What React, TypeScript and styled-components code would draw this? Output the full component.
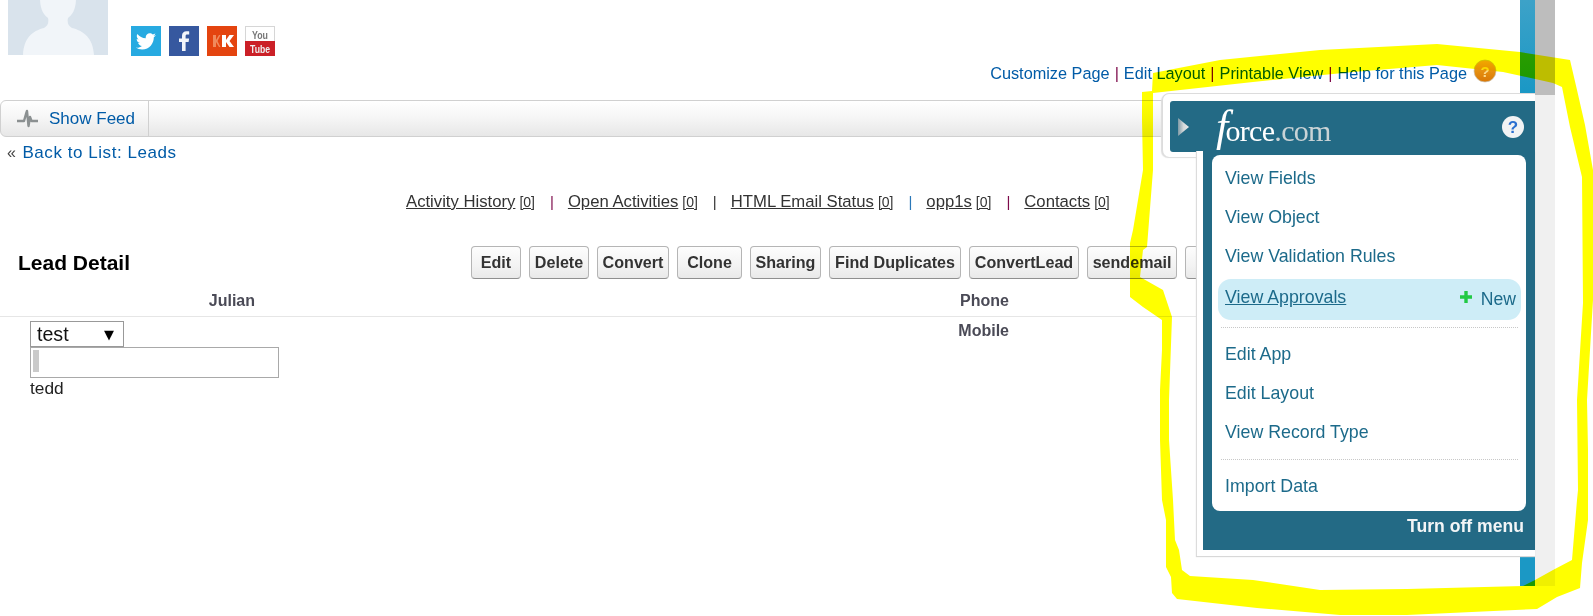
import React from "react";
import styled, { createGlobalStyle } from "styled-components";

const Global = createGlobalStyle`
  html, body { margin: 0; padding: 0; background: #fff; overflow: hidden; }
  body { font-family: "Liberation Sans", Arial, sans-serif; color: #222; }
`;

const Page = styled.div`
  position: relative; width: 1593px; height: 616px; overflow: hidden; background: #fff;
`;
const Desk = styled.div`
  display: flex; height: 586px; width: 1555px;
`;
const Main = styled.main`
  width: 1520px; flex: none; overflow: hidden;
`;
const Strip = styled.div`
  width: 15px; flex: none;
  background: linear-gradient(180deg, #3da2c8 0, #1b98c5 90px, #1b98c5 100%);
`;
const Track = styled.div`
  width: 20px; flex: none;
  background: linear-gradient(180deg, #bdbdbd 0, #bdbdbd 95px, #f0f0f0 95px, #f0f0f0 100%);
`;

const Head = styled.div`
  display: flex; align-items: flex-end; height: 56px; padding-left: 8px;
`;
const Avatar = styled.svg`
  display: block; width: 100px; height: 55px; margin-bottom: 1px; margin-right: 23px;
`;
const Socials = styled.div`
  display: flex; gap: 8px;
`;
const SocialIcon = styled.svg`
  display: block; width: 30px; height: 30px;
`;
const TopLinks = styled.nav`
  display: flex; justify-content: flex-end; align-items: center; height: 24px;
  margin-top: 5px; padding-right: 23px; font-size: 16.3px; color: #015ba7;
`;
const Bar = styled.span<{ $c?: string }>`
  color: ${p => p.$c || "#7d0a4a"}; margin: 0 5px;
`;
const HelpDot = styled.svg`
  display: block; width: 24px; height: 24px; margin-left: 6px; margin-top: -4px;
`;
const Feed = styled.div`
  display: flex; width: 1210px; height: 37px; box-sizing: border-box; margin-top: 15px;
  border: 1px solid #d0d0d0; border-width: 1px 1px 1px 1px; border-radius: 6px 0 0 6px;
  background: linear-gradient(180deg, #ffffff 0%, #f5f5f5 50%, #e7e7e7 100%);
`;
const FeedButton = styled.div`
  display: flex; align-items: center; width: 148px; box-sizing: border-box;
  border-right: 1px solid #d0d0d0; padding-left: 15px; gap: 10px;
  font-size: 17px; color: #015ba7;
`;
const Pulse = styled.svg`
  display: block; width: 23px; height: 20px; flex: none;
`;
const Back = styled.div`
  height: 22px; line-height: 22px; margin-top: 5px; padding-left: 7px;
  font-size: 17px; letter-spacing: 0.55px; color: #015ba7;
`;
const Quote = styled.span`
  color: #444; font-size: 16px; margin-right: 6px;
`;
const Related = styled.div`
  display: flex; align-items: baseline; height: 22px; line-height: 22px;
  margin-top: 27px; padding-left: 406px; font-size: 16.7px; color: #333;
`;
const RelLink = styled.span`
  text-decoration: underline;
`;
const Count = styled.span`
  font-size: 14px; text-decoration: underline; margin-left: 4px;
`;
const RelBar = styled.span<{ $c: string }>`
  color: ${p => p.$c}; font-size: 15px; margin: 0 14px 0 15px;
`;
const DetailHead = styled.div`
  display: flex; align-items: center; height: 33px; margin-top: 33px;
`;
const Title = styled.h2`
  width: 453px; margin: 0; padding-left: 18px; box-sizing: content-box; flex: none;
  font-size: 21px; font-weight: 700; color: #000;
`;
const Buttons = styled.div`
  display: flex; gap: 8px; flex: none;
`;
const Btn = styled.button<{ $w: number }>`
  width: ${p => p.$w}px; height: 33px; padding: 0; box-sizing: border-box;
  border: 1px solid #b5b5b5; border-bottom-color: #8f8f8f; border-radius: 4px;
  background: linear-gradient(180deg, #fdfdfd 0%, #f3f3f3 60%, #e9e9e9 100%);
  font-family: "Liberation Sans", Arial, sans-serif; font-size: 16.1px; font-weight: 700; color: #333;
`;
const FieldHead = styled.div`
  display: grid; grid-template-columns: 255px 754px; height: 38px; width: 1196px;
  box-sizing: border-box; border-bottom: 1px solid #e6e6e6;
`;
const FieldLabel = styled.div`
  text-align: right; font-size: 16px; font-weight: 700; color: #4a4a56; line-height: 44px;
`;
const FieldRow = styled.div`
  display: grid; grid-template-columns: 279px 730px; padding-top: 4px;
`;
const FieldValue = styled.div`
  padding-left: 30px; display: flex; flex-direction: column; align-items: flex-start;
`;
const MobileLabel = styled.div`
  text-align: right; font-size: 16px; font-weight: 700; color: #4a4a56; line-height: 19px;
`;
const SelectBox = styled.div`
  display: flex; align-items: center; justify-content: space-between; box-sizing: border-box;
  width: 94px; height: 26px; border: 1px solid #999; padding: 0 9px 0 6px;
  font-size: 19.6px; color: #111;
`;
const Arrow = styled.span`
  font-size: 13px; color: #000; font-family: "DejaVu Sans", sans-serif;
`;
const TextBox = styled.div`
  box-sizing: border-box; width: 249px; height: 31px; border: 1px solid #a9a9a9; padding: 2px;
`;
const Caret = styled.div`
  width: 6px; height: 22px; background: #cacaca;
`;
const Tedd = styled.div`
  font-size: 17.3px; line-height: 20px; color: #222;
`;

const Panel = styled.aside`
  position: absolute; left: 1162px; top: 93px; width: 373px;
`;
const Tab = styled.div`
  height: 64px; box-sizing: border-box; padding: 7px 0 6px 7px; background: #fff;
  border-top: 1px solid #dcdcdc; border-left: 1px solid #dcdcdc; border-radius: 7px 0 0 7px;
  box-shadow: -1px 1px 1px #ddd;
`;
const TabHead = styled.div`
  display: flex; align-items: center; height: 51px; background: #236a85; border-radius: 3px 0 0 3px;
  padding-left: 8px; padding-right: 11px;
`;
const Toggle = styled.svg`
  display: block; width: 11px; height: 18px; flex: none; margin-right: 27px;
`;
const Logo = styled.div`
  flex: 1; display: flex; align-items: baseline; font-family: "Liberation Serif", serif;
  font-size: 30px; letter-spacing: -0.7px; color: #fff; height: 40px; line-height: 40px;
`;
const LogoF = styled.span`
  font-style: italic; font-size: 44px; margin-right: -2px;
`;
const LogoCom = styled.span`
  color: #c9d3d6;
`;
const Body = styled.div`
  margin-left: 34px; padding: 0 0 6px 6px; background: #fff;
  border-left: 1px solid #dcdcdc; box-shadow: 0 1px 1px #d8d8d8; margin-top: -6px; position: relative;
  box-sizing: border-box;
`;
const Column = styled.div`
  background: #236a85; padding: 4px 9px 0 9px;
`;
const Menu = styled.ul`
  list-style: none; margin: 0; padding: 4px 0 5px; background: #fff; border-radius: 8px;
  font-size: 17.8px; color: #1c6a8a;
`;
const Item = styled.li`
  height: 39px; line-height: 39px; padding-left: 13px;
`;
const ActiveItem = styled.li`
  display: flex; align-items: center; justify-content: space-between; height: 41px;
  margin: 3px 5px 0 6px; padding: 0 5px 0 7px; background: #ceedf7; border-radius: 13px;
`;
const ActiveLink = styled.span`
  text-decoration: underline; margin-top: -4px;
`;
const NewLink = styled.span`
  display: flex; align-items: center; gap: 9px; font-size: 17.6px;
`;
const Plus = styled.svg`
  display: block; width: 12px; height: 12px; margin-top: -6px;
`;
const Divider = styled.li<{ $gap: number }>`
  height: 0; border-top: 1px dotted #c8c8c8; margin: ${p => p.$gap}px 8px 7px 9px;
`;
const TurnOff = styled.div`
  height: 39px; line-height: 31px; text-align: right; padding-right: 2px;
  font-size: 17.6px; font-weight: 700; color: #f2f5f6;
`;
const Scribble = styled.svg`
  position: absolute; left: 0; top: 0; width: 1593px; height: 616px; mix-blend-mode: multiply; pointer-events: none;
`;

const btns: [string, number][] = [
  ["Edit", 50], ["Delete", 60], ["Convert", 72], ["Clone", 65], ["Sharing", 71],
  ["Find Duplicates", 132], ["ConvertLead", 110], ["sendemail", 90], ["Next", 90],
];

const outer = "M1142 92 L1152 91 L1153 73 L1220 60 L1320 50 L1437 44 L1520 52 L1570 60 L1577 90 L1585 125 L1593 170 L1593 300 L1587 400 L1588 450 L1588 520 L1582 563 L1580 588 L1557 597 L1537 609 L1407 615 L1340 615 L1257 608 L1177 599 L1172 593 L1171 577 L1166 567 L1166 520 L1162 500 L1160 440 L1160 390 L1162 350 L1162 320 L1143 307 L1130 297 L1130 243 L1133 230 L1143 170 L1142 120 Z";
const inner = "M1153 93 L1253 82 L1353 72 L1437 65 L1503 72 L1553 83 L1562 87 L1570 127 L1582 177 L1583 303 L1577 400 L1578 490 L1577 500 L1572 560 L1553 570 L1535 580 L1523 586 L1407 589 L1320 590 L1253 580 L1190 576 L1182 570 L1179 550 L1175 540 L1173 500 L1169 440 L1169 400 L1172 317 L1163 290 L1140 277 L1143 250 L1147 247 L1153 170 Z";

export default function App() {
  return (
    <Page>
      <Global />
      <Desk>
        <Main>
          <Head>
            <Avatar viewBox="0 0 100 55">
              <rect width="100" height="55" fill="#d9e3ec" />
              <path d="M32 -2 C32 10 36 15 40 18 C41 22 40 26 36 28 C24 31 16 38 15 55 L86 55 C85 38 76 31 64 28 C60 26 59 22 60 18 C64 15 68 10 68 -2 Z" fill="#f1f5f9" />
            </Avatar>
            <Socials>
              <SocialIcon viewBox="0 0 30 30">
                <rect width="30" height="30" fill="#27aae1" />
                <path d="M25 9.1c-.7.3-1.5.6-2.4.7.9-.5 1.5-1.3 1.8-2.3-.8.5-1.7.8-2.6 1-.8-.8-1.9-1.3-3-1.3-2.3 0-4.1 1.9-4.1 4.1 0 .3 0 .6.1.9-3.4-.2-6.4-1.8-8.4-4.3-.4.6-.6 1.3-.6 2.1 0 1.4.7 2.7 1.8 3.4-.7 0-1.3-.2-1.9-.5v.1c0 2 1.4 3.7 3.3 4-.3.1-.7.1-1.1.1-.3 0-.5 0-.8-.1.5 1.6 2 2.8 3.8 2.9-1.4 1.1-3.2 1.8-5.1 1.8-.3 0-.7 0-1-.1 1.8 1.2 4 1.9 6.3 1.9 7.6 0 11.7-6.3 11.7-11.7v-.5c.9-.6 1.6-1.3 2.2-2.2z" fill="#fff" />
              </SocialIcon>
              <SocialIcon viewBox="0 0 30 30">
                <rect width="30" height="30" fill="#36589f" />
                <path d="M16.6 25v-9h3l.5-3.5h-3.5v-2.2c0-1 .3-1.7 1.7-1.7h1.9V5.4c-.3 0-1.4-.1-2.7-.1-2.7 0-4.5 1.6-4.5 4.6v2.6h-3V16h3v9z" fill="#f2f5fa" />
              </SocialIcon>
              <SocialIcon viewBox="0 0 30 30">
                <rect width="30" height="30" fill="#e4440f" />
                <path d="M6 9h3v5l3-5h1.5L10.5 15l3 6H12l-3-5v5H6z" fill="#f08a5c" />
                <path d="M15 9h4v5l3.5-5H27l-4.5 6 4.5 6h-4.500L19 16v5h-4z" fill="#fff" />
              </SocialIcon>
              <SocialIcon viewBox="0 0 30 30">
                <rect width="30" height="30" fill="#d6d6d6" />
                <rect x="1" y="1" width="28" height="14" fill="#fff" />
                <rect y="15" width="30" height="15" fill="#cb2027" />
                <text x="15" y="13" textAnchor="middle" fontFamily="Liberation Sans Narrow, Liberation Sans, sans-serif" fontSize="11" fontWeight="700" fill="#777" textLength="16" lengthAdjust="spacingAndGlyphs">You</text>
                <text x="15" y="27" textAnchor="middle" fontFamily="Liberation Sans Narrow, Liberation Sans, sans-serif" fontSize="11" fontWeight="700" fill="#eee" textLength="20" lengthAdjust="spacingAndGlyphs">Tube</text>
              </SocialIcon>
            </Socials>
          </Head>
          <TopLinks>
            <span>Customize Page</span><Bar>|</Bar>
            <span>Edit Layout</span><Bar>|</Bar>
            <span>Printable View</span><Bar>|</Bar>
            <span>Help for this Page</span>
            <HelpDot viewBox="0 0 24 24">
              <defs>
                <linearGradient id="og" x1="0" y1="0" x2="0" y2="1">
                  <stop offset="0" stopColor="#f2a91c" />
                  <stop offset="1" stopColor="#d97706" />
                </linearGradient>
              </defs>
              <circle cx="12" cy="12" r="11" fill="url(#og)" stroke="#c9c4b8" strokeWidth="0.7" />
              <text x="12" y="17.500" textAnchor="middle" fontFamily="Liberation Sans, sans-serif" fontSize="15" fontWeight="700" fill="#fbd98a">?</text>
            </HelpDot>
          </TopLinks>
          <Feed>
            <FeedButton>
              <Pulse viewBox="0 0 23 20">
                <path d="M1 12 L8 12 L10 5 L11 2 L12.500 17 L14 8 L15.500 12 L22 12" fill="none" stroke="#8b9091" strokeWidth="2.4" strokeLinejoin="round" />
              </Pulse>
              Show Feed
            </FeedButton>
          </Feed>
          <Back><Quote>«</Quote>Back to List: Leads</Back>
          <Related>
            <RelLink>Activity History</RelLink><Count>[0]</Count><RelBar $c="#7d0a4a">|</RelBar>
            <RelLink>Open Activities</RelLink><Count>[0]</Count><RelBar $c="#333">|</RelBar>
            <RelLink>HTML Email Status</RelLink><Count>[0]</Count><RelBar $c="#2b78b8">|</RelBar>
            <RelLink>opp1s</RelLink><Count>[0]</Count><RelBar $c="#7d0a4a">|</RelBar>
            <RelLink>Contacts</RelLink><Count>[0]</Count>
          </Related>
          <DetailHead>
            <Title>Lead Detail</Title>
            <Buttons>
              {btns.map(([t, w]) => <Btn key={t} $w={w}>{t}</Btn>)}
            </Buttons>
          </DetailHead>
          <FieldHead>
            <FieldLabel>Julian</FieldLabel>
            <FieldLabel>Phone</FieldLabel>
          </FieldHead>
          <FieldRow>
            <FieldValue>
              <SelectBox>test<Arrow>▼</Arrow></SelectBox>
              <TextBox><Caret /></TextBox>
              <Tedd>tedd</Tedd>
            </FieldValue>
            <MobileLabel>Mobile</MobileLabel>
          </FieldRow>
        </Main>
        <Strip />
        <Track />
      </Desk>
      <Panel>
        <Tab>
          <TabHead>
            <Toggle viewBox="0 0 11 18">
              <defs>
                <linearGradient id="tg" x1="0" y1="0" x2="1" y2="0">
                  <stop offset="0" stopColor="#7f9aa6" />
                  <stop offset="0.5" stopColor="#d5d9da" />
                  <stop offset="1" stopColor="#ececec" />
                </linearGradient>
              </defs>
              <path d="M0 0 L11 9 L0 18 Z" fill="url(#tg)" />
            </Toggle>
            <Logo><LogoF>f</LogoF>orce<LogoCom>.com</LogoCom></Logo>
            <svg width="22" height="22" viewBox="0 0 22 22" style={{ display: "block", flex: "none" }}>
              <circle cx="11" cy="11" r="11" fill="#f1f3f4" />
              <text x="11" y="17" textAnchor="middle" fontFamily="Liberation Sans, sans-serif" fontSize="17" fontWeight="700" fill="#2a6fd0">?</text>
            </svg>
          </TabHead>
        </Tab>
        <Body>
          <Column>
            <Menu>
              <Item>View Fields</Item>
              <Item>View Object</Item>
              <Item>View Validation Rules</Item>
              <ActiveItem>
                <ActiveLink>View Approvals</ActiveLink>
                <NewLink>
                  <Plus viewBox="0 0 12 12"><path d="M6 0 V12 M0 6 H12" stroke="#21c944" strokeWidth="3.4" /></Plus>
                  New
                </NewLink>
              </ActiveItem>
              <Divider $gap={7} />
              <Item>Edit App</Item>
              <Item>Edit Layout</Item>
              <Item>View Record Type</Item>
              <Divider $gap={7} />
              <Item>Import Data</Item>
            </Menu>
            <TurnOff>Turn off menu</TurnOff>
          </Column>
        </Body>
      </Panel>
      <Scribble viewBox="0 0 1593 616">
        <path d={outer + " " + inner} fill="#ffff00" fillRule="evenodd" />
      </Scribble>
    </Page>
  );
}
